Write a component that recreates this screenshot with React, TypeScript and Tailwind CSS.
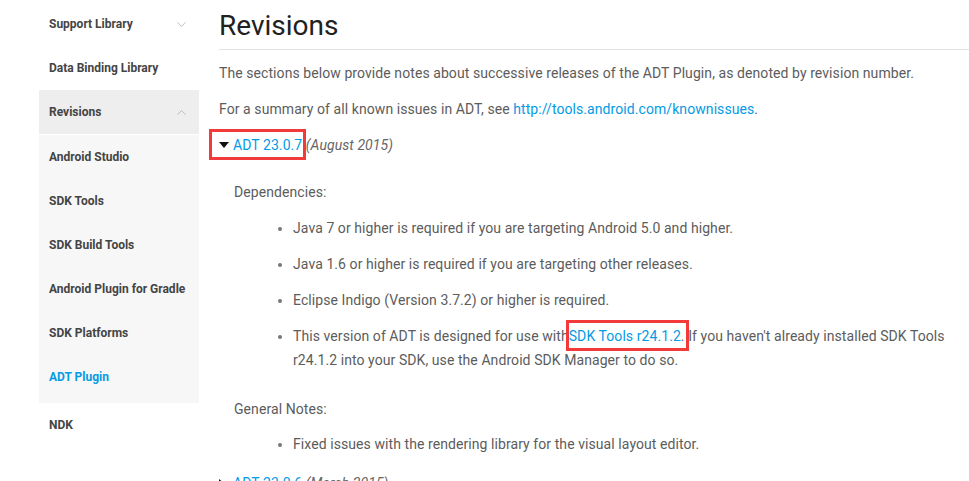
import { ChevronDown, ChevronUp } from "lucide-react";

const subItems = [
  "Android Studio",
  "SDK Tools",
  "SDK Build Tools",
  "Android Plugin for Gradle",
  "SDK Platforms",
  "ADT Plugin",
];

function NavRow({ label, active, chevron }: { label: string; active?: boolean; chevron?: "down" | "up" }) {
  return (
    <div className="flex items-center justify-between h-[44px] pl-[10px] pr-[10px]">
      <span className={`text-[12px] font-bold ${active ? "text-[#039be5]" : "text-[#444]"}`}>{label}</span>
      {chevron === "down" && <ChevronDown size={15} strokeWidth={1.25} className="text-[#aaa]" />}
      {chevron === "up" && <ChevronUp size={15} strokeWidth={1.25} className="text-[#aaa]" />}
    </div>
  );
}

function Sidebar() {
  return (
    <nav className="ml-[39px] w-[160px] shrink-0 pt-[2px]">
      <NavRow label="Support Library" chevron="down" />
      <NavRow label="Data Binding Library" />
      <div className="bg-[#eeeeee] border-b border-white">
        <NavRow label="Revisions" chevron="up" />
      </div>
      <div className="bg-[#f7f7f7] pb-[4px]">
        {subItems.map((s) => (
          <NavRow key={s} label={s} active={s === "ADT Plugin"} />
        ))}
      </div>
      <NavRow label="NDK" />
    </nav>
  );
}

function Marked({ children, className }: { children: React.ReactNode; className: string }) {
  return (
    <span className="relative">
      {children}
      <span className={`absolute border-[3px] border-[#f23a3a] pointer-events-none ${className}`} />
    </span>
  );
}

function Triangle({ down }: { down?: boolean }) {
  return down ? (
    <svg width="10" height="6" viewBox="0 0 10 6" className="inline-block mr-[4px] align-[2px]">
      <path d="M0 0h10L5 6z" fill="#111" />
    </svg>
  ) : (
    <svg width="6" height="10" viewBox="0 0 6 10" className="inline-block mr-[8px] align-[-1px]">
      <path d="M0 0l6 5-6 5z" fill="#111" />
    </svg>
  );
}

export default function App() {
  const link = "text-[#039be5]";
  return (
    <div className="w-[969px] h-[481px] overflow-hidden bg-white flex" style={{ fontFamily: "Roboto, 'Liberation Sans', sans-serif" }}>
      <Sidebar />
      <main className="ml-[20px] flex-1 text-[14px] leading-[24px] tracking-[0.075px] text-[#5c5c5c]">
        <h1 className="mt-[8px] text-[28px] leading-[36px] tracking-normal text-[#212121] pb-[5px] border-b border-[#e3e3e3]">Revisions</h1>
        <p className="mt-[11px]">
          The sections below provide notes about successive releases of the ADT Plugin, as denoted by revision number.
        </p>
        <p className="mt-[12px]">
          For a summary of all known issues in ADT, see <span className={link}>http://tools.android.com/knownissues</span>.
        </p>
        <p className="mt-[12px]">
          <Marked className="-left-[10px] -right-[4px] -top-[8px] -bottom-[7px]">
            <Triangle down />
            <span className={link}>ADT 23.0.7</span>
          </Marked>{" "}
          <em className="text-[#666]">(August 2015)</em>
        </p>
        <div className="ml-[15px]">
          <p className="mt-[23px]">Dependencies:</p>
          <ul className="mt-[12px] pl-[59px] list-disc marker:text-[#777] space-y-[12px]">
            <li>Java 7 or higher is required if you are targeting Android 5.0 and higher.</li>
            <li>Java 1.6 or higher is required if you are targeting other releases.</li>
            <li>Eclipse Indigo (Version 3.7.2) or higher is required.</li>
            <li>
              This version of ADT is designed for use with
              <Marked className="-left-[3px] -right-[4px] -top-[8px] -bottom-[7px]">
                <span className={link}>SDK Tools r24.1.2</span>.
              </Marked>{" "}
              If you haven't already installed SDK Tools r24.1.2 into your SDK, use the Android SDK Manager to do so.
            </li>
          </ul>
          <p className="mt-[25px]">General Notes:</p>
          <ul className="mt-[11px] pl-[59px] list-disc marker:text-[#777]">
            <li>Fixed issues with the rendering library for the visual layout editor.</li>
          </ul>
        </div>
        <p className="mt-[15px]">
          <Triangle />
          <span className={link}>ADT 23.0.6</span> <em className="text-[#666]">(March 2015)</em>
        </p>
      </main>
    </div>
  );
}
